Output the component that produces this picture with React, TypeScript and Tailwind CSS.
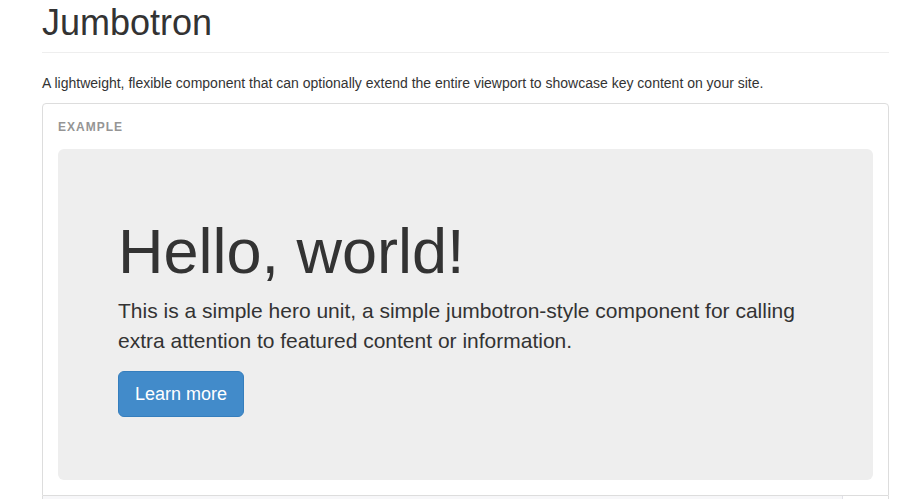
const App = () => {
  return (
    <div className="min-h-screen bg-white font-['Liberation_Sans',Arial,sans-serif] text-[#333]">
      <div className="ml-[42px] w-[847px] pt-[3px]">
        <h1 className="border-b border-[#eee] pb-[9px] text-[36px] leading-[1.1] font-normal">
          Jumbotron
        </h1>

        <p className="mt-5 mb-[10px] text-[14px] leading-[20px]">
          A lightweight, flexible component that can optionally extend the entire viewport to
          showcase key content on your site.
        </p>

        <div className="rounded-t border border-[#ddd] px-[15px] pt-[16px] pb-[15px]">
          <div className="h-[29px] text-[12px] leading-[15px] font-bold uppercase tracking-[1px] text-[#959595]">
            Example
          </div>

          <div className="rounded-[6px] bg-[#eee] px-[60px] pt-[48px] pb-[63px]">
            <h2 className="mt-5 mb-[10px] text-[63px] leading-[1.1] font-normal">
              Hello, world!
            </h2>
            <p className="mb-[15px] text-[21px] leading-[30px] font-light">
              This is a simple hero unit, a simple jumbotron-style component for calling extra
              attention to featured content or information.
            </p>
            <button className="rounded-[6px] border border-[#357ebd] bg-[#428bca] px-4 py-[10px] text-[18px] leading-[24px] text-white">
              Learn more
            </button>
          </div>
        </div>

        <div className="flex h-[60px] border-x border-[#ddd]">
          <div className="w-[800px] border-r border-[#e1e1e8] bg-[#f7f7f9]" />
        </div>
      </div>
    </div>
  );
};

export default App;
